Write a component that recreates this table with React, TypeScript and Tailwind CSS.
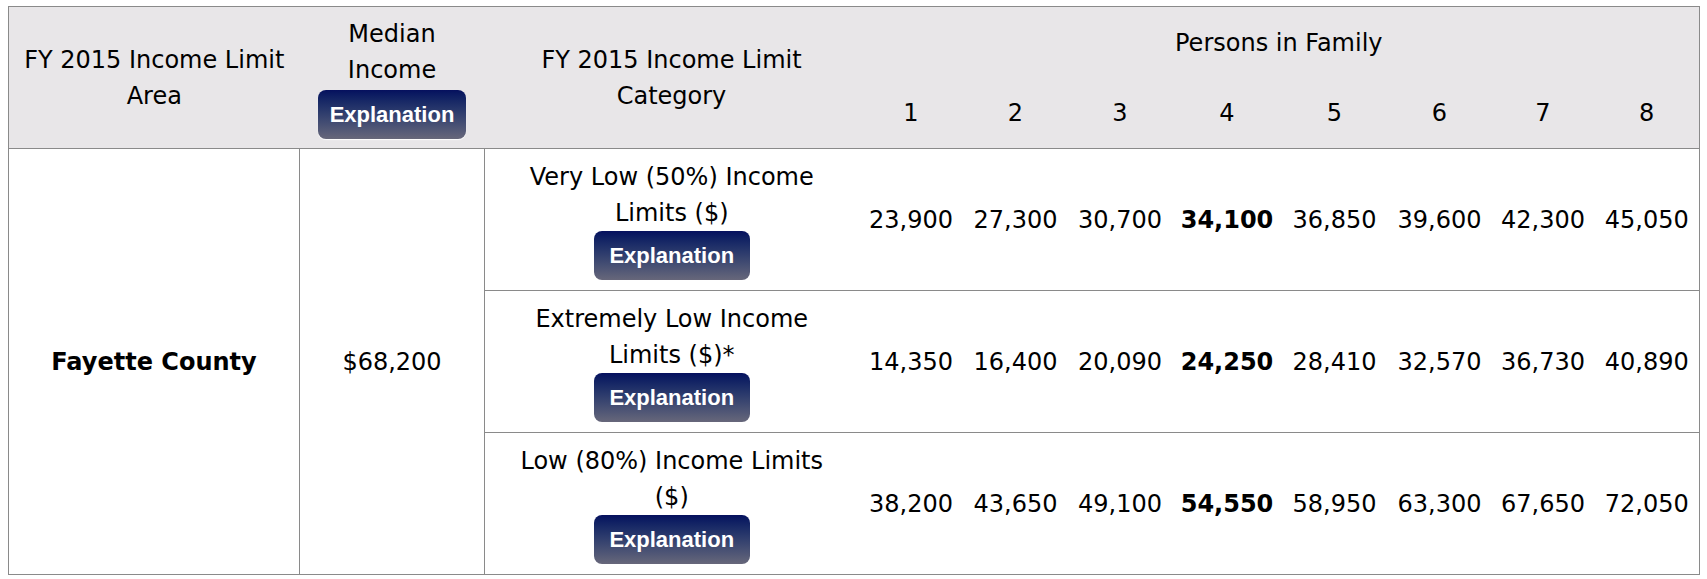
import React from "react";

type Row = { label: string; values: string[] };

const rows: Row[] = [
  { label: "Very Low (50%) Income Limits ($)", values: ["23,900", "27,300", "30,700", "34,100", "36,850", "39,600", "42,300", "45,050"] },
  { label: "Extremely Low Income Limits ($)*", values: ["14,350", "16,400", "20,090", "24,250", "28,410", "32,570", "36,730", "40,890"] },
  { label: "Low (80%) Income Limits ($)", values: ["38,200", "43,650", "49,100", "54,550", "58,950", "63,300", "67,650", "72,050"] },
];

const numWidths = [105, 104, 105, 109, 106, 104, 103, 105];

function ExplainButton({ w }: { w: string }) {
  return (
    <button
      className={`${w} mx-auto block h-[49px] rounded-[8px] bg-gradient-to-b from-[#06105e] to-[#67677a] text-[22px] font-bold text-white shadow-[0_1px_1px_rgba(255,255,255,0.9)] [font-family:'Liberation_Sans',Arial,sans-serif]`}
    >
      Explanation
    </button>
  );
}

export default function App() {
  return (
    <div className="min-h-[579px] bg-white pl-[8px] pt-[6px] text-black [font-family:'DejaVu_Sans',Verdana,sans-serif]">
      <table className="w-[1692px] table-fixed border-collapse border border-[#8a8a8a] text-[24px] leading-[36px]">
        <colgroup>
          <col className="w-[291px]" />
          <col className="w-[185px]" />
          <col className="w-[374px]" />
          {numWidths.map((w, i) => (
            <col key={i} style={{ width: w }} />
          ))}
        </colgroup>
        <thead className="bg-[#e8e6e8]">
          <tr className="h-[72px]">
            <th rowSpan={2} className="px-[12px] text-center align-middle font-normal">
              FY 2015 Income Limit Area
            </th>
            <th rowSpan={2} className="px-[12px] pb-[9px] pt-[9px] text-center align-middle font-normal">
              <div>Median Income</div>
              <div className="mt-[2px]">
                <ExplainButton w="w-[148px]" />
              </div>
            </th>
            <th rowSpan={2} className="px-[12px] text-center align-middle font-normal">
              FY 2015 Income Limit Category
            </th>
            <th colSpan={8} className="text-center align-middle font-normal">
              Persons in Family
            </th>
          </tr>
          <tr className="h-[70px] border-b border-[#8a8a8a]">
            {numWidths.map((_, i) => (
              <th key={i} className="text-center align-middle font-normal">
                {i + 1}
              </th>
            ))}
          </tr>
        </thead>
        <tbody>
          {rows.map((r, ri) => (
            <tr key={ri} className="h-[142px] border-b border-[#8a8a8a]">
              {ri === 0 && (
                <>
                  <td rowSpan={3} className="border-r border-[#8a8a8a] text-center align-middle font-bold">
                    Fayette County
                  </td>
                  <td rowSpan={3} className="border-r border-[#8a8a8a] text-center align-middle">
                    $68,200
                  </td>
                </>
              )}
              <td className="px-[20px] py-[10px] text-center align-middle">
                <div>{r.label}</div>
                <ExplainButton w="w-[156px]" />
              </td>
              {r.values.map((v, i) => (
                <td key={i} className={`text-center align-middle ${i === 3 ? "font-bold" : ""}`}>
                  {v}
                </td>
              ))}
            </tr>
          ))}
        </tbody>
      </table>
    </div>
  );
}
